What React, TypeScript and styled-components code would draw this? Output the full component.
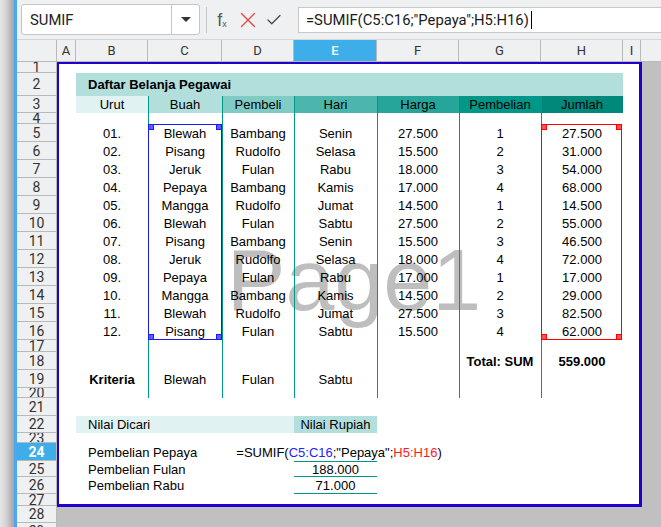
import React from 'react';
import styled, { createGlobalStyle, css } from 'styled-components';
import { X, Check } from 'lucide-react';

const GlobalStyle = createGlobalStyle`
  html, body { margin: 0; padding: 0; background: #eff0f1; }
  body { font-family: "Liberation Sans", Arial, sans-serif; }
  * { box-sizing: border-box; }
`;

const COLS = [40, 19, 72, 74, 72, 83, 82, 82, 82, 18, 20];
const ROWS = [22, 11, 23, 17, 11, ...Array(12).fill(18), 12, 18, 18, 10, 18, 17, 10, 18, 16, 17, 12, 17, 17];

const TEAL = '#009688';
const PAGE_BLUE = '#2200cc';

type Place = { $c: number; $r: number; $cs?: number; $rs?: number };
const place = css<Place>`
  grid-column: ${(p) => p.$c} / span ${(p) => p.$cs ?? 1};
  grid-row: ${(p) => p.$r} / span ${(p) => p.$rs ?? 1};
`;

const Frame = styled.div`
  display: flex;
  width: 661px;
  height: 527px;
  overflow: hidden;
  background: #eff0f1;
`;

const Gutter = styled.div`
  width: 14px;
  flex: none;
  background: linear-gradient(to right, #e6e6e6 0%, #d2d2d2 45%, #a4a4a4 100%);
`;

const Stripe = styled.div`
  width: 3px;
  flex: none;
  background: #4aa6f2;
`;

const Main = styled.div`
  flex: 1;
  display: flex;
  flex-direction: column;
  min-width: 0;
`;

const Toolbar = styled.div`
  height: 40px;
  flex: none;
  display: flex;
  align-items: center;
  padding-left: 4px;
  background: #eff0f1;
  border-bottom: 1px solid #d4d5d7;
`;

const NameBox = styled.div`
  width: 179px;
  height: 31px;
  display: flex;
  background: #fff;
  border: 1px solid #c5c5c5;
  border-radius: 3px;
  overflow: hidden;
`;

const NameText = styled.div`
  flex: 1;
  display: flex;
  align-items: center;
  padding-left: 8px;
  font: 14.8px Roboto, "Liberation Sans", sans-serif;
  color: #222;
`;

const DropButton = styled.div`
  width: 28px;
  border-left: 1px solid #c5c5c5;
  display: flex;
  align-items: center;
  justify-content: center;
`;

const Triangle = styled.span`
  width: 0;
  height: 0;
  border-left: 5px solid transparent;
  border-right: 5px solid transparent;
  border-top: 5px solid #333;
`;

const Divider = styled.div`
  width: 1px;
  height: 26px;
  background: #c8c8c8;
  margin: 0 2px 0 6px;
`;

const IconSlot = styled.div<{ $color: string }>`
  width: 26px;
  height: 26px;
  display: flex;
  align-items: center;
  justify-content: center;
  color: ${(p) => p.$color};
`;

const Fx = styled.span`
  font: 18px "Liberation Sans", Arial, sans-serif;
  color: #5a5a5a;
  line-height: 1;
  sub {
    font-size: 9px;
    vertical-align: -1px;
  }
`;

const FormulaInput = styled.div`
  flex: 1;
  height: 26px;
  margin-left: 11px;
  background: #fff;
  border: 1px solid #c8c8c8;
  border-right: none;
  display: flex;
  align-items: center;
  padding-left: 7px;
  font: 14.8px Roboto, "Liberation Sans", sans-serif;
  color: #1a1a1a;
  white-space: nowrap;
`;

const Caret = styled.span`
  width: 1px;
  height: 18px;
  background: #000;
  margin-left: 2px;
`;

const Sheet = styled.div`
  flex: none;
  display: grid;
  grid-template-columns: ${COLS.map((w) => `${w}px`).join(' ')};
  grid-template-rows: ${ROWS.map((h) => `${h}px`).join(' ')};
  background: #fff;
`;

const ColHead = styled.div<Place & { $active?: boolean; $plain?: boolean }>`
  ${place};
  display: flex;
  align-items: center;
  justify-content: center;
  background: ${(p) => (p.$active ? '#3daee9' : '#eff0f1')};
  color: ${(p) => (p.$active ? '#fff' : '#333')};
  font: ${(p) => (p.$active ? 500 : 400)} 13px Roboto, "Liberation Sans", sans-serif;
  border-right: ${(p) => (p.$plain ? 'none' : '1px solid #b9b9b9')};
  border-bottom: 1px solid #b9b9b9;
  z-index: 2;
`;

const RowHead = styled.div<Place & { $active?: boolean }>`
  ${place};
  display: flex;
  align-items: center;
  justify-content: center;
  overflow: hidden;
  line-height: 1;
  background: ${(p) => (p.$active ? '#3daee9' : '#eff0f1')};
  color: ${(p) => (p.$active ? '#fff' : '#333')};
  font: ${(p) => (p.$active ? 700 : 400)} 14px Roboto, "Liberation Sans", sans-serif;
  border-right: 1px solid #b9b9b9;
  border-bottom: 1px solid #b9b9b9;
  z-index: 2;
`;

type CellProps = Place & {
  $align?: 'left' | 'center';
  $bold?: boolean;
  $bg?: string;
  $pad?: number;
  $top?: boolean;
  $bottom?: boolean;
};

const Cell = styled.div<CellProps>`
  ${place};
  display: flex;
  align-items: center;
  justify-content: ${(p) => (p.$align === 'left' ? 'flex-start' : 'center')};
  padding-left: ${(p) => p.$pad ?? 0}px;
  background: ${(p) => p.$bg ?? 'transparent'};
  font: ${(p) => (p.$bold ? 700 : 400)} 13px "Liberation Sans", Arial, sans-serif;
  color: #000;
  white-space: nowrap;
  border-top: ${(p) => (p.$top ? `1px solid ${TEAL}` : 'none')};
  border-bottom: ${(p) => (p.$bottom ? `1px solid ${TEAL}` : 'none')};
  z-index: 2;
`;

const Rule = styled.div<Place>`
  ${place};
  border-left: 1px solid ${TEAL};
  z-index: 3;
`;

const OutArea = styled.div<Place>`
  ${place};
  background: #c0c0c0;
  z-index: 1;
`;

const Watermark = styled.div<Place>`
  ${place};
  display: flex;
  align-items: center;
  justify-content: center;
  padding: 0 0 8px 10px;
  font: 88px "Liberation Sans", Arial, sans-serif;
  line-height: 1;
  color: #bebebe;
  white-space: nowrap;
  pointer-events: none;
  z-index: 1;
`;

const Selection = styled.div<Place & { $color: string; $trim?: number }>`
  ${place};
  position: relative;
  border: 1px solid ${(p) => p.$color};
  margin-right: ${(p) => p.$trim ?? 0}px;
  z-index: 4;
  pointer-events: none;
`;

const Handle = styled.span<{ $color: string; $fill: string; $v: 'top' | 'bottom'; $h: 'left' | 'right' }>`
  position: absolute;
  width: 6px;
  height: 6px;
  background: ${(p) => p.$fill};
  border: 1px solid ${(p) => p.$color};
  ${(p) => p.$v}: -1px;
  ${(p) => p.$h}: -1px;
`;

const PageFrame = styled.div<Place>`
  ${place};
  border-left: 2px solid ${PAGE_BLUE};
  border-top: 2px solid ${PAGE_BLUE};
  border-right: 3px solid ${PAGE_BLUE};
  border-bottom: 3px solid ${PAGE_BLUE};
  margin: 0 -1px -1px 0;
  z-index: 5;
  pointer-events: none;
`;

const Ref = styled.span<{ $color: string }>`
  color: ${(p) => p.$color};
`;

const FormulaEcho = styled.span`
  margin-left: 7px;
`;

const col = (l: string) => l.charCodeAt(0) - 63;
const gr = (n: number) => n + 1;

type Spec = {
  r: number;
  c: string;
  text: React.ReactNode;
  span?: number;
  align?: 'left' | 'center';
  bold?: boolean;
  bg?: string;
  pad?: number;
  top?: boolean;
  bottom?: boolean;
};

const DATA: string[][] = [
  ['01.', 'Blewah', 'Bambang', 'Senin', '27.500', '1', '27.500'],
  ['02.', 'Pisang', 'Rudolfo', 'Selasa', '15.500', '2', '31.000'],
  ['03.', 'Jeruk', 'Fulan', 'Rabu', '18.000', '3', '54.000'],
  ['04.', 'Pepaya', 'Bambang', 'Kamis', '17.000', '4', '68.000'],
  ['05.', 'Mangga', 'Rudolfo', 'Jumat', '14.500', '1', '14.500'],
  ['06.', 'Blewah', 'Fulan', 'Sabtu', '27.500', '2', '55.000'],
  ['07.', 'Pisang', 'Bambang', 'Senin', '15.500', '3', '46.500'],
  ['08.', 'Jeruk', 'Rudolfo', 'Selasa', '18.000', '4', '72.000'],
  ['09.', 'Pepaya', 'Fulan', 'Rabu', '17.000', '1', '17.000'],
  ['10.', 'Mangga', 'Bambang', 'Kamis', '14.500', '2', '29.000'],
  ['11.', 'Blewah', 'Rudolfo', 'Jumat', '27.500', '3', '82.500'],
  ['12.', 'Pisang', 'Fulan', 'Sabtu', '15.500', '4', '62.000'],
];

const HEADERS: [string, string, string][] = [
  ['B', 'Urut', '#e0f2f1'],
  ['C', 'Buah', '#b2dfdb'],
  ['D', 'Pembeli', '#80cbc4'],
  ['E', 'Hari', '#4db6ac'],
  ['F', 'Harga', '#26a69a'],
  ['G', 'Pembelian', '#009688'],
  ['H', 'Jumlah', '#00897b'],
];

const LETTERS = ['A', 'B', 'C', 'D', 'E', 'F', 'G', 'H', 'I'];

const specs: Spec[] = [
  { r: 2, c: 'B', span: 7, text: 'Daftar Belanja Pegawai', align: 'left', bold: true, bg: '#b2dfdb', pad: 12 },
  ...HEADERS.map(([c, text, bg]) => ({ r: 3, c, text, bg })),
  ...DATA.flatMap((row, i) =>
    row.map((text, j) => ({ r: 5 + i, c: LETTERS[j + 1], text }))
  ),
  { r: 18, c: 'G', text: 'Total: SUM', bold: true },
  { r: 18, c: 'H', text: '559.000', bold: true },
  { r: 19, c: 'B', text: 'Kriteria', bold: true },
  { r: 19, c: 'C', text: 'Blewah' },
  { r: 19, c: 'D', text: 'Fulan' },
  { r: 19, c: 'E', text: 'Sabtu' },
  { r: 22, c: 'B', span: 3, text: 'Nilai Dicari', align: 'left', bg: '#e0f2f1', pad: 12 },
  { r: 22, c: 'E', text: 'Nilai Rupiah', bg: '#b2dfdb' },
  { r: 24, c: 'B', text: 'Pembelian Pepaya', align: 'left', pad: 12 },
  {
    r: 24,
    c: 'E',
    text: (
      <FormulaEcho>
        =SUMIF(<Ref $color="#2424ff">C5:C16</Ref>;"Pepaya";<Ref $color="#ff1a1a">H5:H16</Ref>)
      </FormulaEcho>
    ),
  },
  { r: 25, c: 'B', text: 'Pembelian Fulan', align: 'left', pad: 12 },
  { r: 25, c: 'E', text: '188.000', top: true, bottom: true },
  { r: 26, c: 'B', text: 'Pembelian Rabu', align: 'left', pad: 12 },
  { r: 26, c: 'E', text: '71.000', bottom: true },
];

const SelectionBox: React.FC<Place & { color: string; fill: string; trim?: number }> = ({ color, fill, trim, ...p }) => (
  <Selection {...p} $color={color} $trim={trim}>
    <Handle $color={color} $fill={fill} $v="top" $h="left" />
    <Handle $color={color} $fill={fill} $v="top" $h="right" />
    <Handle $color={color} $fill={fill} $v="bottom" $h="left" />
    <Handle $color={color} $fill={fill} $v="bottom" $h="right" />
  </Selection>
);

export default function App() {
  const sheetRows = ROWS.length - 1;
  return (
    <>
      <GlobalStyle />
      <Frame>
        <Gutter />
        <Stripe />
        <Main>
          <Toolbar>
            <NameBox>
              <NameText>SUMIF</NameText>
              <DropButton>
                <Triangle />
              </DropButton>
            </NameBox>
            <Divider />
            <IconSlot $color="#5a5a5a">
              <Fx>
                f<sub>x</sub>
              </Fx>
            </IconSlot>
            <IconSlot $color="#e44a4a">
              <X size={26} strokeWidth={1.3} />
            </IconSlot>
            <IconSlot $color="#444">
              <Check size={18} strokeWidth={1.6} />
            </IconSlot>
            <FormulaInput>
              =SUMIF(C5:C16;"Pepaya";H5:H16)
              <Caret />
            </FormulaInput>
          </Toolbar>

          <Sheet>
            <ColHead $c={1} $r={1} />
            {LETTERS.map((l) => (
              <ColHead key={l} $c={col(l)} $r={1} $active={l === 'E'}>
                {l}
              </ColHead>
            ))}
            <ColHead $c={11} $r={1} $plain />

            {Array.from({ length: sheetRows }, (_, i) => (
              <RowHead key={i} $c={1} $r={gr(i + 1)} $active={i + 1 === 24}>
                {i + 1}
              </RowHead>
            ))}

            <OutArea $c={11} $r={2} $rs={sheetRows} />
            <OutArea $c={2} $r={gr(28)} $cs={9} $rs={2} />

            <Watermark $c={2} $r={gr(1)} $cs={9} $rs={27}>
              Page1
            </Watermark>

            {specs.map((s, i) => (
              <Cell
                key={i}
                $c={col(s.c)}
                $r={gr(s.r)}
                $cs={s.span}
                $align={s.align}
                $bold={s.bold}
                $bg={s.bg}
                $pad={s.pad}
                $top={s.top}
                $bottom={s.bottom}
              >
                {s.text}
              </Cell>
            ))}

            {['C', 'D', 'E', 'F', 'G', 'H'].map((l) => (
              <Rule key={l} $c={col(l)} $r={gr(3)} $rs={18} />
            ))}

            <SelectionBox $c={col('C')} $r={gr(5)} $rs={12} color="#1c1cf0" fill="#5c5cff" />
            <SelectionBox $c={col('H')} $r={gr(5)} $rs={12} color="#ff0000" fill="#ff5050" trim={1} />

            <PageFrame $c={2} $r={gr(1)} $cs={9} $rs={27} />
          </Sheet>
        </Main>
      </Frame>
    </>
  );
}
